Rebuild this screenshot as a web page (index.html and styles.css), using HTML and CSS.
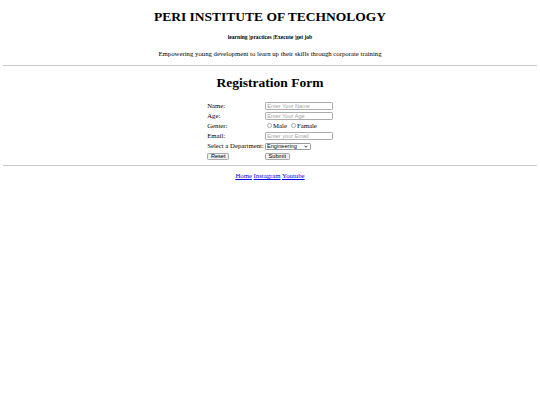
FILE: index.html
```html
<!DOCTYPE html>
<html lang="en">
<head>
<meta charset="utf-8">
<title>PERI Institute of Technology</title>
<link rel="stylesheet" href="styles.css">
</head>
<body class="page">
  <header class="masthead">
    <h1 class="title site-title">PERI INSTITUTE OF TECHNOLOGY</h1>
    <h5 class="tagline">learning |practices |Execute |get job</h5>
    <p class="intro">Empowering young development to learn up their skills through corporate training</p>
  </header>
  <hr class="rule">
  <main class="register">
    <h1 class="title form-title">Registration Form</h1>
    <form class="reg-form">
      <table class="reg-table">
        <tr><td class="label">Name:</td><td><input class="field" type="text" placeholder="Enter Your Name"></td></tr>
        <tr><td class="label">Age:</td><td><input class="field" type="text" placeholder="Enter Your Age"></td></tr>
        <tr><td class="label">Genter:</td><td><label class="choice"><input class="radio" type="radio" name="g">Male</label> <label class="choice"><input class="radio" type="radio" name="g">Famale</label></td></tr>
        <tr><td class="label">Email:</td><td><input class="field" type="email" placeholder="Enter your Email"></td></tr>
        <tr><td class="label">Select a Department:</td><td><span class="select-wrap"><select class="field-select"><option>Engineering</option><option>Medical</option></select><svg class="chev" viewBox="0 0 8 5" width="4" height="3"><path d="M1 1 L4 4 L7 1" fill="none" stroke="#111" stroke-width="1.6"/></svg></span></td></tr>
        <tr><td><button class="btn btn-reset" type="reset">Reset</button></td><td><button class="btn btn-submit" type="button">Submit</button></td></tr>
      </table>
    </form>
  </main>
  <hr class="rule">
  <p class="footer-links">
    <a class="link" href="#">Home</a>
    <a class="link" href="#">Instagram</a>
    <a class="link" href="#">Youtube</a>
  </p>
</body>
</html>
```

FILE: styles.css
```css
.page {
  margin: 3.375px;
  font-family: "Liberation Serif", "Times New Roman", serif;
  font-size: 6.75px;
  line-height: 7.77px;
  color: #000;
  background: #fff;
}
.masthead, .register, .footer-links {
  text-align: center;
}
.title {
  font-size: 13.5px;
  line-height: 15.5px;
  font-weight: bold;
  margin: 9.045px 0;
}
.site-title {
  margin-top: 6px;
}
.tagline {
  font-size: 5.6px;
  line-height: 6.44px;
  font-weight: bold;
  margin: 9.36px 0;
}
.intro {
  margin: 6.75px 0;
}
.rule {
  margin: 3.375px 0;
  border: 0;
  border-top: 1px solid #c9c9c9;
  height: 0;
}
.form-title {
  margin-bottom: 9.8px;
}
.reg-form {
  margin: 0;
}
.reg-table {
  margin: 0 auto;
  text-align: left;
  border-spacing: 1px;
}
.reg-table td {
  padding: 0;
  height: 9.2px;
  vertical-align: middle;
  white-space: nowrap;
}
.field {
  box-sizing: border-box;
  width: 68px;
  height: 8px;
  margin: 0;
  padding: 0 1.5px;
  border: 1px solid #ababab;
  border-radius: 1.2px;
  font-family: "Liberation Sans", Arial, sans-serif;
  font-size: 5.6px;
  color: #000;
  vertical-align: middle;
  outline: none;
}
.field::placeholder {
  color: #a3a3a3;
}
.choice {
  display: inline-flex;
  align-items: center;
}
.radio {
  appearance: none;
  -webkit-appearance: none;
  box-sizing: border-box;
  width: 5.2px;
  height: 5.2px;
  margin: 0 1px 0 2.1px;
  border: 1px solid #a8a8a8;
  border-radius: 50%;
  background: #fff;
}
.select-wrap {
  position: relative;
  display: inline-block;
  vertical-align: middle;
}
.field-select {
  appearance: none;
  -webkit-appearance: none;
  box-sizing: border-box;
  width: 46px;
  height: 7.6px;
  margin: 0;
  padding: 0.4px 0 0 1.2px;
  border: 1px solid #9a9a9a;
  border-radius: 1.2px;
  background: #fff;
  font-family: "Liberation Sans", Arial, sans-serif;
  font-size: 5.6px;
  line-height: 5.2px;
  color: #000;
  display: block;
}
.chev {
  position: absolute;
  right: 3px;
  top: 2.4px;
}
.btn {
  box-sizing: border-box;
  height: 7.4px;
  margin: 0;
  padding: 0 1.7px;
  border: 1px solid #a9a9a9;
  border-radius: 1.2px;
  background: #efefef;
  font-family: "Liberation Sans", Arial, sans-serif;
  font-size: 5.6px;
  line-height: 5px;
  color: #000;
  vertical-align: middle;
}
.btn-reset {
  width: 22px;
}
.btn-submit {
  width: 25px;
}
.footer-links {
  margin: 5.75px 0;
}
.link {
  color: #0000ee;
  text-decoration: underline;
}
```
